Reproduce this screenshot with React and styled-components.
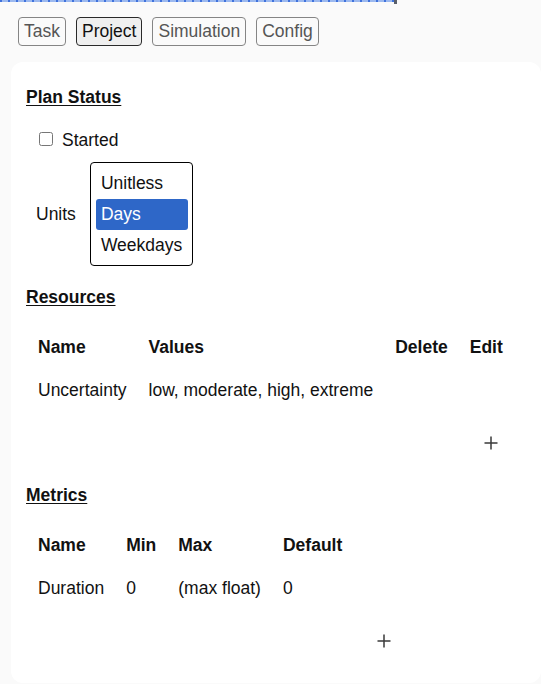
import React from 'react';
import styled, { createGlobalStyle } from 'styled-components';

const GlobalStyle = createGlobalStyle`
  html, body {
    margin: 0;
    padding: 0;
    background: #fafafa;
  }
  body {
    font-family: "Liberation Sans", Arial, sans-serif;
    font-size: 17.5px;
    line-height: 20px;
    color: #111;
  }
`;

const FocusStrip = styled.div`
  display: flex;
  align-items: flex-start;
  height: 2px;
`;

const FocusBar = styled.div`
  width: 394px;
  height: 2px;
  background-image: repeating-linear-gradient(90deg, #3f72dc 0 2px, #9cb9ef 2px 8px);
`;

const FocusHandle = styled.div`
  width: 3px;
  height: 4px;
  background: #5a5f6a;
`;

const TabBar = styled.nav`
  display: flex;
  gap: 10px;
  padding: 15px 18px 0;
`;

const Tab = styled.button`
  font: inherit;
  line-height: 21px;
  padding: 3px 5px 3px;
  border-radius: 4px;
  border: 1px solid ${({ $active }) => ($active ? '#2a2a2a' : '#858585')};
  background: ${({ $active }) => ($active ? '#efefef' : '#fafafa')};
  color: ${({ $active }) => ($active ? '#111' : '#555')};
  cursor: pointer;
`;

const Card = styled.main`
  box-sizing: border-box;
  width: 530px;
  margin: 16px 0 0 11px;
  padding: 25px 15px 21px;
  background: #fff;
  border-radius: 12px;
`;

const Section = styled.section`
  & + & {
    margin-top: 21px;
  }
`;

const Heading = styled.h2`
  margin: 0;
  font-size: inherit;
  font-weight: 700;
  line-height: 20px;
  text-decoration: underline;
  text-underline-offset: 2px;
`;

const CheckRow = styled.label`
  display: flex;
  align-items: center;
  gap: 9px;
  margin-top: 23px;
  padding-left: 9px;
`;

const Check = styled.input`
  width: 14px;
  height: 14px;
  margin: 0 0 3px 4px;
`;

const UnitsRow = styled.div`
  display: flex;
  align-items: center;
  gap: 14px;
  margin-top: 12px;
  padding-left: 10px;
`;

const ListBox = styled.div`
  box-sizing: border-box;
  width: 103px;
  padding: 5px 4px 4px 5px;
  border: 1px solid #000;
  border-radius: 4px;
  background: #fff;
`;

const Option = styled.div`
  height: 31px;
  line-height: 31px;
  padding: 0 5px;
  border-radius: 3px;
  white-space: nowrap;
  background: ${({ $selected }) => ($selected ? '#2e67c8' : 'transparent')};
  color: ${({ $selected }) => ($selected ? '#fff' : '#111')};
`;

const Table = styled.table`
  margin: 19px 0 0 1px;
  border-collapse: separate;
  border-spacing: 0;
`;

const Th = styled.th`
  padding: 11px;
  line-height: 21px;
  text-align: left;
  font-weight: 700;
  white-space: nowrap;
  width: ${({ $w }) => $w || 'auto'};
`;

const Td = styled.td`
  padding: 11px;
  line-height: 21px;
  text-align: left;
  white-space: nowrap;
`;

const AddCell = styled.td`
  padding: 20px 11px 11px;
  text-align: right;
`;

const AddButton = styled.button`
  display: inline-flex;
  align-items: center;
  justify-content: center;
  height: 21px;
  padding: 0 5px;
  border: none;
  background: transparent;
  color: #3a3a3a;
  cursor: pointer;
  vertical-align: top;
`;

const PlusIcon = () => (
  <svg width="14" height="14" viewBox="0 0 14 14" fill="none" stroke="currentColor" strokeWidth="1.5">
    <path d="M7 0.5v13M0.5 7h13" />
  </svg>
);

const tabs = ['Task', 'Project', 'Simulation', 'Config'];
const units = ['Unitless', 'Days', 'Weekdays'];

const resources = [{ name: 'Uncertainty', values: 'low, moderate, high, extreme' }];
const metrics = [{ name: 'Duration', min: '0', max: '(max float)', def: '0' }];

const App = () => (
  <>
    <GlobalStyle />
    <FocusStrip>
      <FocusBar />
      <FocusHandle />
    </FocusStrip>
    <TabBar>
      {tabs.map((t) => (
        <Tab key={t} $active={t === 'Project'}>{t}</Tab>
      ))}
    </TabBar>
    <Card>
      <Section>
        <Heading>Plan Status</Heading>
        <CheckRow>
          <Check type="checkbox" />
          Started
        </CheckRow>
        <UnitsRow>
          <span>Units</span>
          <ListBox role="listbox">
            {units.map((u) => (
              <Option key={u} role="option" $selected={u === 'Days'}>{u}</Option>
            ))}
          </ListBox>
        </UnitsRow>
      </Section>

      <Section>
        <Heading>Resources</Heading>
        <Table>
          <thead>
            <tr>
              <Th>Name</Th>
              <Th>Values</Th>
              <Th>Delete</Th>
              <Th>Edit</Th>
            </tr>
          </thead>
          <tbody>
            {resources.map((r) => (
              <tr key={r.name}>
                <Td>{r.name}</Td>
                <Td>{r.values}</Td>
                <Td />
                <Td />
              </tr>
            ))}
            <tr>
              <AddCell colSpan={4}>
                <AddButton aria-label="Add resource"><PlusIcon /></AddButton>
              </AddCell>
            </tr>
          </tbody>
        </Table>
      </Section>

      <Section>
        <Heading>Metrics</Heading>
        <Table>
          <thead>
            <tr>
              <Th>Name</Th>
              <Th>Min</Th>
              <Th>Max</Th>
              <Th>Default</Th>
              <Th $w="32px" />
            </tr>
          </thead>
          <tbody>
            {metrics.map((m) => (
              <tr key={m.name}>
                <Td>{m.name}</Td>
                <Td>{m.min}</Td>
                <Td>{m.max}</Td>
                <Td>{m.def}</Td>
                <Td />
              </tr>
            ))}
            <tr>
              <AddCell colSpan={5}>
                <AddButton aria-label="Add metric"><PlusIcon /></AddButton>
              </AddCell>
            </tr>
          </tbody>
        </Table>
      </Section>
    </Card>
  </>
);

export default App;
